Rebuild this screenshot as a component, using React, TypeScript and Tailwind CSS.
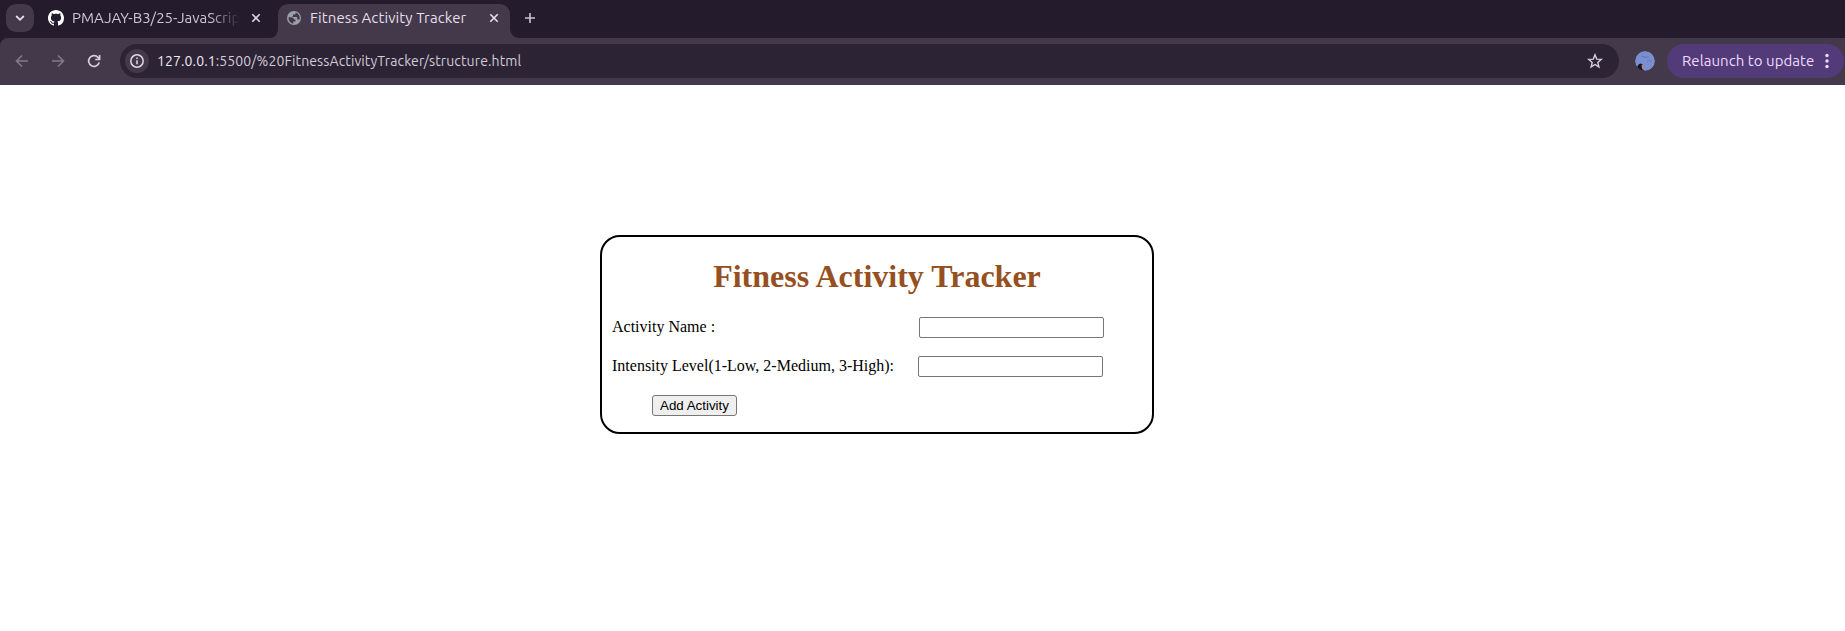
import React from "react";

const chromeFont = "font-['Ubuntu','Noto_Sans',sans-serif]";

function GitHubIcon() {
  return (
    <svg width="16" height="16" viewBox="0 0 16 16" fill="#fff" className="shrink-0">
      <path d="M8 0C3.58 0 0 3.58 0 8c0 3.54 2.29 6.53 5.47 7.59.4.07.55-.17.55-.38 0-.19-.01-.82-.01-1.49-2.01.37-2.53-.49-2.69-.94-.09-.23-.48-.94-.82-1.13-.28-.15-.68-.52-.01-.53.63-.01 1.08.58 1.23.82.72 1.21 1.87.87 2.33.66.07-.52.28-.87.51-1.07-1.78-.2-3.64-.89-3.64-3.95 0-.87.31-1.59.82-2.15-.08-.2-.36-1.02.08-2.12 0 0 .67-.21 2.2.82.64-.18 1.32-.27 2-.27s1.36.09 2 .27c1.53-1.04 2.2-.82 2.2-.82.44 1.1.16 1.92.08 2.12.51.56.82 1.27.82 2.15 0 3.07-1.87 3.75-3.65 3.95.29.25.54.73.54 1.48 0 1.07-.01 1.93-.01 2.2 0 .21.15.46.55.38A8.01 8.01 0 0 0 16 8c0-4.42-3.58-8-8-8z" />
    </svg>
  );
}

function GlobeIcon() {
  return (
    <svg width="14" height="14" viewBox="0 0 14 14" className="shrink-0">
      <circle cx="7" cy="7" r="7" fill="#9aa0a6" />
      <path d="M1.600 6.200H4.500Q7 6.400 7 8.500H8.500V10.500H6.300V12.700A5.700 5.700 0 0 1 1.600 6.200zM8.700 1.500V2.200Q8.700 3.500 7.300 3.500H6V4.800Q6 5.600 5.200 5.600V6H9.300Q10.200 6 10.200 7V8.500H12.500A5.700 5.700 0 0 0 8.700 1.500z" fill="#43394b" />
    </svg>
  );
}

function CloseIcon({ color }: { color: string }) {
  return (
    <svg width="10" height="10" viewBox="0 0 10 10" stroke={color} strokeWidth="1.6" className="shrink-0">
      <path d="M1.3 1.3 8.7 8.7M8.7 1.3 1.3 8.7" />
    </svg>
  );
}

function TabStrip() {
  return (
    <div className="flex h-[38px] bg-[#241b2d]">
      <div className="ml-[6px] mt-1 flex h-7 w-7 items-center justify-center rounded-[10px] bg-[#43394b]">
        <svg width="10" height="8" viewBox="0 0 10 8" fill="none" stroke="#e8e0ec" strokeWidth="1.8">
          <path d="m1.2 2 3.8 3.8L8.800 2" />
        </svg>
      </div>
      <div className="ml-[14px] flex h-9 w-[222px] items-center">
        <GitHubIcon />
        <div className="ml-2 w-[168px] whitespace-nowrap text-[15px] text-[#cfc7d5] [mask-image:linear-gradient(to_right,#000_138px,transparent_168px)]">
          PMAJAY-B3/25-JavaScrip
        </div>
        <div className="ml-[11px] flex">
          <CloseIcon color="#ddd5e2" />
        </div>
      </div>
      <svg width="8" height="38" viewBox="0 0 8 38" fill="#43394b">
        <path d="M8 28v10H0c5 0 8-4 8-10z" />
      </svg>
      <div className="mt-1 flex h-[34px] w-[232px] items-start rounded-t-[10px] bg-[#43394b] pl-[9px] pt-[7px]">
        <GlobeIcon />
        <div className="-mt-[3px] ml-[9px] w-[179px] whitespace-nowrap text-[15px] tracking-[0.1px] leading-5 text-[#e6dfea]">
          Fitness Activity Tracker
        </div>
        <div className="mt-[2px] flex">
          <CloseIcon color="#e8e0ec" />
        </div>
      </div>
      <svg width="10" height="38" viewBox="0 0 10 38" fill="#43394b">
        <path d="M0 28v10h10C4 38 0 34 0 28z" />
      </svg>
      <svg width="12" height="12" viewBox="0 0 12 12" stroke="#cbc3d1" strokeWidth="1.6" className="ml-1 mt-3">
        <path d="M6 1v10M1 6h10" />
      </svg>
    </div>
  );
}

function Toolbar() {
  return (
    <div className="bg-[#241b2d]">
      <div className="flex h-[47px] items-center rounded-tl-lg bg-[#43394b] pb-[1px]">
        <svg width="14" height="14" viewBox="0 0 14 14" fill="none" stroke="#81788a" strokeWidth="1.6" className="ml-[15px]">
          <path d="M13 7H2M7 1.500 1.500 7 7 12.500" />
        </svg>
        <svg width="14" height="14" viewBox="0 0 14 14" fill="none" stroke="#81788a" strokeWidth="1.6" className="ml-[22px]">
          <path d="M1 7h11M7 1.500 12.500 7 7 12.500" />
        </svg>
        <svg width="14" height="14" viewBox="0 0 14 14" fill="none" stroke="#d6cfdb" strokeWidth="1.700" className="ml-[22px]">
          <path d="M12.200 8.500A5.400 5.400 0 1 1 11 3.300L12.500 5M12.600 1v4.500H8.200" />
        </svg>
        <div className="ml-[19px] flex h-[34px] w-[1499px] items-center rounded-full bg-[#2c2435]">
          <div className="ml-[5px] flex h-6 w-6 items-center justify-center rounded-full bg-[#43394b]">
            <svg width="14" height="14" viewBox="0 0 14 14" fill="none" stroke="#e0d8e5" strokeWidth="1.500">
              <circle cx="7" cy="7" r="6.200" />
              <path d="M7 6.200v4M7 3.500v1.500" />
            </svg>
          </div>
          <div className="ml-2 whitespace-nowrap text-[14px] tracking-[0.115px] text-[#d2cbd7]">
            <span className="text-[#efe8f3]">127.0.0.1</span>:5500/%20FitnessActivityTracker/structure.html
          </div>
          <svg width="16" height="16" viewBox="0 0 16 16" fill="none" stroke="#d6cfdb" strokeWidth="1.400" className="ml-auto mr-4">
            <path d="m8 1.800 1.700 4.300 4.600.3-3.500 3 1.100 4.500L8 11.500l-3.900 2.400 1.100-4.500-3.500-3 4.600-.3z" />
          </svg>
        </div>
        <svg width="20" height="20" viewBox="0 0 20 20" className="ml-4 rounded-full">
          <circle cx="10" cy="10" r="10" fill="#7a8ed0" />
          <path d="m6 5 4 1M9 6.500l5-.5M12 10.500l3-1.500M15 11l2-1" stroke="#5f74b3" strokeWidth=".8" />
          <path d="M2 20c0-5 1-7 4-7.500l2 1.500-1 4 3 2z" fill="#181523" />
          <path d="m6.500 14.500 2-1 .5 3-2 1z" fill="#b77f87" />
        </svg>
        <div className="ml-3 flex h-[34px] w-[177px] items-center rounded-full bg-[#533a78] pl-[15px] text-[15px] tracking-[0.05px] text-[#ecdcff]">
          <span className="w-[142px] whitespace-nowrap">Relaunch to update</span>
          <svg width="4" height="16" viewBox="0 0 4 16" fill="#ecdcff" className="ml-px">
            <circle cx="2" cy="2.500" r="1.700" />
            <circle cx="2" cy="8" r="1.700" />
            <circle cx="2" cy="13.500" r="1.700" />
          </svg>
        </div>
      </div>
    </div>
  );
}

function Field({ label, inputClass }: { label: string; inputClass: string }) {
  return (
    <label className="flex h-[21px] items-start justify-between leading-[20px]">
      <span>{label}</span>
      <input
        type="text"
        className={`h-[21px] w-[185px] rounded-[2px] border border-[#767676] bg-white px-0.5 ${inputClass}`}
      />
    </label>
  );
}

export default function App() {
  return (
    <div className="h-[631px] w-[1845px] overflow-hidden bg-white">
      <header className={chromeFont}>
        <TabStrip />
        <Toolbar />
      </header>
      <main className="ml-[600px] mt-[150px] flex h-[199px] w-[554px] flex-col rounded-[20px] border-2 border-black px-[10px] font-['Liberation_Serif',serif] text-base text-black">
        <h1 className="mt-[21px] text-center text-[32px] font-bold leading-[37px] text-[#964f1e]">
          Fitness Activity Tracker
        </h1>
        <form className="mt-[22px] flex flex-col gap-[18px]">
          <Field label="Activity Name :" inputClass="mr-[38px]" />
          <Field label="Intensity Level(1-Low, 2-Medium, 3-High):" inputClass="mr-[39px]" />
          <button
            type="button"
            className="ml-10 h-[21px] w-[85px] whitespace-nowrap rounded-[3px] border border-[#767676] bg-[#efefef] text-center font-['Liberation_Sans',sans-serif] text-[13.333px] leading-[18px]"
          >
            Add Activity
          </button>
        </form>
      </main>
    </div>
  );
}
